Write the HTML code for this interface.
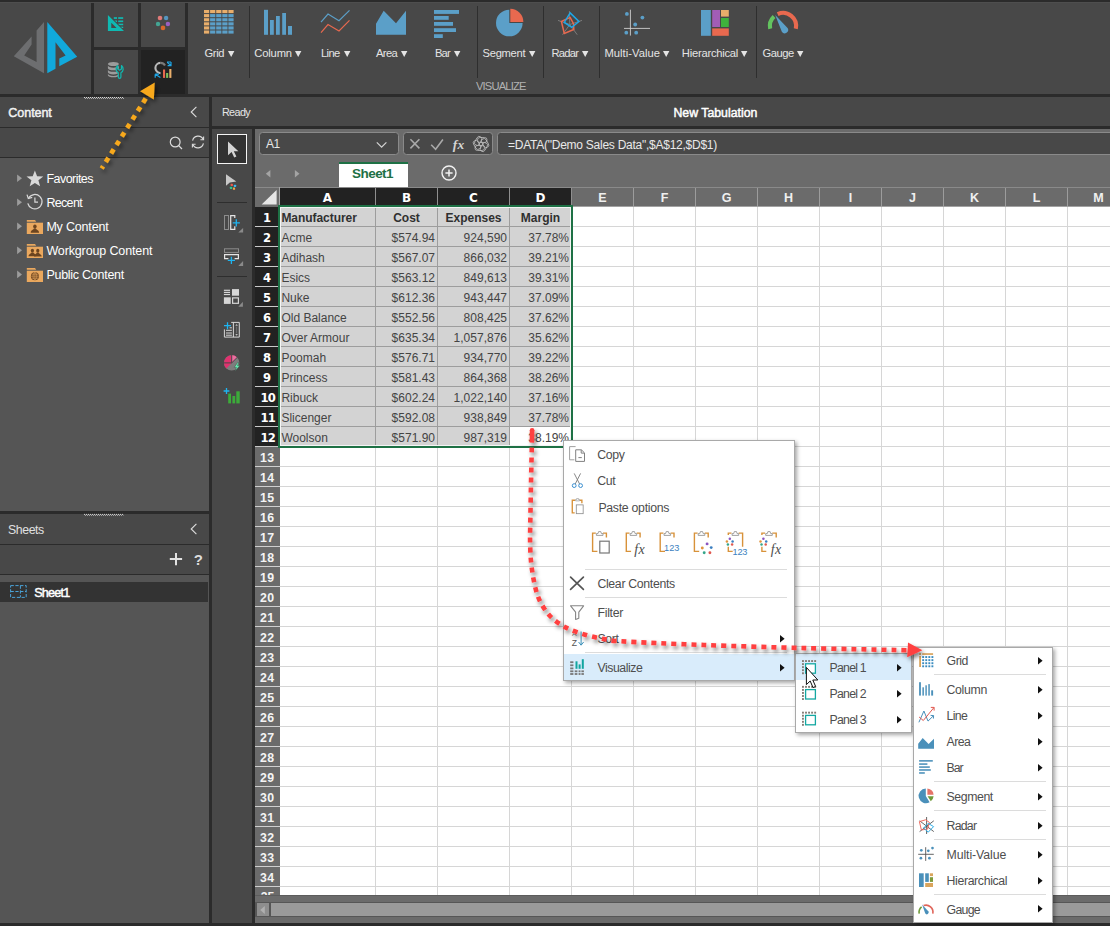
<!DOCTYPE html>
<html><head><meta charset="utf-8"><title>New Tabulation</title>
<style>
html,body{margin:0;padding:0;}
body{width:1110px;height:926px;overflow:hidden;position:relative;background:#484848;font-family:"Liberation Sans",Arial,sans-serif;}
body div,body svg,body span.t{position:absolute;}
span.t{display:block;}
svg{overflow:visible;}
</style></head><body>
<div style="left:0px;top:0px;width:1110px;height:926px;background:#2b2b2b;"></div>
<div style="left:0px;top:2px;width:1110px;height:1px;background:#4e4e4e;"></div>
<div style="left:0px;top:3px;width:91px;height:91px;background:#484848;"></div>
<div style="left:94px;top:3px;width:44px;height:44px;background:#484848;"></div>
<div style="left:141px;top:3px;width:44px;height:44px;background:#484848;"></div>
<div style="left:94px;top:50px;width:44px;height:44px;background:#484848;"></div>
<div style="left:141px;top:50px;width:44px;height:44px;background:#222222;"></div>
<div style="left:188px;top:3px;width:922px;height:91px;background:#484848;"></div>
<div style="left:0px;top:97px;width:209px;height:30px;background:#484848;"></div>
<div style="left:212px;top:97px;width:898px;height:29px;background:#484848;"></div>
<div style="left:0px;top:128px;width:209px;height:29px;background:#484848;"></div>
<div style="left:0px;top:158px;width:209px;height:353px;background:#555555;"></div>
<div style="left:0px;top:514px;width:209px;height:30px;background:#484848;"></div>
<div style="left:0px;top:545px;width:209px;height:29px;background:#484848;"></div>
<div style="left:0px;top:575px;width:209px;height:348px;background:#555555;"></div>
<div style="left:212px;top:129px;width:40px;height:794px;background:#484848;"></div>
<div style="left:255px;top:129px;width:855px;height:794px;background:#6b6b6b;"></div>
<svg style="left:0px;top:0px;" width="92" height="95" viewBox="0 0 92 95"><polygon points="44,22 44,73.2 13.8,56.2 31.6,36.4 31.6,44.5 24.2,55.4 36.6,62 36.6,30.4" fill="#6d6e70"/><polygon points="47.3,22 77.2,56.7 59.3,66.3 59.3,58.6 65.6,55.4 55.5,42.2 55.5,68.7 47.3,73.2" fill="#11a9dc"/></svg>
<svg style="left:94px;top:3px;" width="44" height="44" viewBox="0 0 44 44"><rect x="19.8" y="14.2" width="3.2" height="1.7" fill="#0fbab2"/><rect x="24.2" y="14.2" width="5" height="1.7" fill="#0fbab2"/><rect x="19.8" y="17.5" width="3.2" height="1.6" fill="#0fbab2"/><rect x="24.2" y="17.5" width="5" height="1.6" fill="#0fbab2"/><rect x="19.8" y="20.7" width="3.2" height="1.5" fill="#0fbab2"/><rect x="24.2" y="20.7" width="5" height="1.5" fill="#0fbab2"/><rect x="19.8" y="23.7" width="3.2" height="1.3" fill="#0fbab2"/><rect x="24.2" y="23.7" width="5" height="1.3" fill="#0fbab2"/><polygon points="13.9,10.6 13.9,29 32,29" fill="#484848"/><path d="M13.9 12 L13.9 27.9 L30 27.9 Z M17.3 19.8 L17.3 24.9 L22.6 24.9 Z" fill="#0fbab2" fill-rule="evenodd"/></svg>
<svg style="left:141px;top:3px;" width="44" height="44" viewBox="0 0 44 44"><circle cx="19" cy="15" r="2.3" fill="#e07a78"/><circle cx="25.1" cy="15" r="2.2" fill="#5596c0"/><circle cx="17" cy="21" r="2.2" fill="#44a594"/><circle cx="26.9" cy="21" r="2.2" fill="#9a5fc0"/><circle cx="22" cy="24.9" r="2.3" fill="#d9682a"/></svg>
<svg style="left:94px;top:50px;" width="44" height="44" viewBox="0 0 44 44"><g fill="#9c9c9c"><ellipse cx="19.4" cy="14" rx="5.5" ry="2.1"/><path d="M13.9 15.6 a5.5 2.1 0 0 0 11 0 v2.6 a5.5 2.1 0 0 1 -11 0z"/><path d="M13.9 19.7 a5.5 2.1 0 0 0 11 0 v2.6 a5.5 2.1 0 0 1 -11 0z"/><path d="M13.9 23.8 a5.5 2.1 0 0 0 11 0 v1.4 a5.5 2.1 0 0 1 -11 0z"/></g><path d="M23.7 15.6 a4.3 4.3 0 0 0 0.6 7.2 v4.2 a1.2 1.2 0 0 0 2.6 0 v-4.2 a4.3 4.3 0 0 0 0.6 -7.2 v3.4 l-1.9 1.2 l-1.9 -1.2 z" fill="#484848" stroke="#10b8b0" stroke-width="1.2" stroke-linejoin="round"/></svg>
<svg style="left:141px;top:50px;" width="44" height="44" viewBox="0 0 44 44"><path d="M19.5 12.9 A5.1 5.1 0 1 0 19.5 23.1" fill="none" stroke="#b9b9b9" stroke-width="2.1"/><path d="M19.5 12.9 A5.1 5.1 0 0 1 24 15.6" fill="none" stroke="#7a7a7a" stroke-width="2.1"/><path d="M26.2 12.4 L29.6 15.2 M26 12 H30 M30 12 V15.6 H26.6" fill="none" stroke="#1ea7e8" stroke-width="1.2"/><path d="M14.2 24.2 L19.4 27.4 M14.2 24.2 H18 M14.2 24.2 V27.8" fill="none" stroke="#1ea7e8" stroke-width="1.2"/><rect x="22" y="19.5" width="2.1" height="8.4" fill="#e8694f"/><rect x="25.1" y="23" width="2.1" height="4.9" fill="#7cc05c"/><rect x="28.3" y="19" width="2.1" height="8.9" fill="#e9ae6b"/></svg>
<div style="left:249px;top:6px;width:1px;height:72px;background:#2e2e2e;"></div>
<div style="left:477px;top:6px;width:1px;height:72px;background:#2e2e2e;"></div>
<div style="left:543px;top:6px;width:1px;height:72px;background:#2e2e2e;"></div>
<div style="left:599px;top:6px;width:1px;height:72px;background:#2e2e2e;"></div>
<div style="left:756px;top:6px;width:1px;height:72px;background:#2e2e2e;"></div>
<svg style="left:203.6px;top:9.9px;" width="30" height="24" viewBox="0 0 30 24"><rect x="0.0" y="0.0" width="5.2" height="3.1" fill="#e9ae6b"/><rect x="6.1" y="0.0" width="5.2" height="3.1" fill="#e9ae6b"/><rect x="12.2" y="0.0" width="5.2" height="3.1" fill="#e9ae6b"/><rect x="18.3" y="0.0" width="5.2" height="3.1" fill="#e9ae6b"/><rect x="24.4" y="0.0" width="5.2" height="3.1" fill="#e9ae6b"/><rect x="0.0" y="4.1" width="5.2" height="3.1" fill="#e9ae6b"/><rect x="6.1" y="4.1" width="5.2" height="3.1" fill="#5b9fc8"/><rect x="12.2" y="4.1" width="5.2" height="3.1" fill="#5b9fc8"/><rect x="18.3" y="4.1" width="5.2" height="3.1" fill="#5b9fc8"/><rect x="24.4" y="4.1" width="5.2" height="3.1" fill="#5b9fc8"/><rect x="0.0" y="8.2" width="5.2" height="3.1" fill="#e9ae6b"/><rect x="6.1" y="8.2" width="5.2" height="3.1" fill="#5b9fc8"/><rect x="12.2" y="8.2" width="5.2" height="3.1" fill="#5b9fc8"/><rect x="18.3" y="8.2" width="5.2" height="3.1" fill="#5b9fc8"/><rect x="24.4" y="8.2" width="5.2" height="3.1" fill="#5b9fc8"/><rect x="0.0" y="12.3" width="5.2" height="3.1" fill="#e9ae6b"/><rect x="6.1" y="12.3" width="5.2" height="3.1" fill="#5b9fc8"/><rect x="12.2" y="12.3" width="5.2" height="3.1" fill="#5b9fc8"/><rect x="18.3" y="12.3" width="5.2" height="3.1" fill="#5b9fc8"/><rect x="24.4" y="12.3" width="5.2" height="3.1" fill="#5b9fc8"/><rect x="0.0" y="16.4" width="5.2" height="3.1" fill="#e9ae6b"/><rect x="6.1" y="16.4" width="5.2" height="3.1" fill="#5b9fc8"/><rect x="12.2" y="16.4" width="5.2" height="3.1" fill="#5b9fc8"/><rect x="18.3" y="16.4" width="5.2" height="3.1" fill="#5b9fc8"/><rect x="24.4" y="16.4" width="5.2" height="3.1" fill="#5b9fc8"/><rect x="0.0" y="20.5" width="5.2" height="3.1" fill="#e9ae6b"/><rect x="6.1" y="20.5" width="5.2" height="3.1" fill="#5b9fc8"/><rect x="12.2" y="20.5" width="5.2" height="3.1" fill="#5b9fc8"/><rect x="18.3" y="20.5" width="5.2" height="3.1" fill="#5b9fc8"/><rect x="24.4" y="20.5" width="5.2" height="3.1" fill="#5b9fc8"/></svg>
<svg style="left:264px;top:9px;" width="30" height="27" viewBox="0 0 30 27"><g fill="#5b9fc8"><rect x="0" y="0.8" width="4" height="25"/><rect x="6" y="11" width="3.8" height="14.8"/><rect x="12" y="7" width="3.8" height="18.8"/><rect x="18.2" y="4" width="3.8" height="21.8"/><rect x="24" y="17" width="4" height="8.8"/></g></svg>
<svg style="left:318px;top:6px;" width="36" height="32" viewBox="0 0 36 32"><polyline points="3,16.2 10,8 21,14.7 31.5,4.4" fill="none" stroke="#5b9fc8" stroke-width="1.2"/><polyline points="3,26.7 10,18.5 21,25 31.5,14.3" fill="none" stroke="#e8694f" stroke-width="1.2"/></svg>
<svg style="left:376px;top:9px;" width="31" height="27" viewBox="0 0 31 27"><polygon points="0,25.8 0,14.8 7.7,1.8 20,14.2 30,1.8 30,25.8" fill="#5b9fc8"/></svg>
<svg style="left:434px;top:10px;" width="26" height="29" viewBox="0 0 26 29"><g fill="#5b9fc8"><rect x="0" y="0" width="25" height="3.9"/><rect x="0" y="6" width="14.7" height="3.8"/><rect x="0" y="12" width="19" height="3.8"/><rect x="0" y="18.2" width="22" height="3.8"/><rect x="0" y="24.2" width="8.8" height="3.8"/></g></svg>
<svg style="left:495px;top:8px;" width="30" height="30" viewBox="0 0 30 30"><path d="M14.3 15 L14.3 1.7 A13.3 13.3 0 1 0 27.6 15 Z" fill="#5b9fc8"/><path d="M15.3 13.9 L15.3 0.8 A13.1 13.1 0 0 1 28.4 13.9 Z" fill="#e8694f"/></svg>
<svg style="left:555px;top:8px;" width="30" height="30" viewBox="0 0 30 30"><g stroke="#7c7c7c" stroke-width="1" fill="none"><path d="M14.8 16.5 L14.4 3.1 M14.8 16.5 L27 12.4 M14.8 16.5 L22.2 26.7 M14.8 16.5 L7.5 26.7 M14.8 16.5 L3 12.4"/></g><polygon points="15.1,9.4 18.5,15.7 18.8,21.5 9.3,25.4 6.4,13.5" fill="none" stroke="#e8694f" stroke-width="1.5"/><polygon points="15.1,4.9 23.9,13.5 16.8,19.3 9.3,14.4" fill="none" stroke="#1ea7e8" stroke-width="1.5"/></svg>
<svg style="left:620px;top:8px;" width="34" height="30" viewBox="0 0 34 30"><path d="M10.4 1.7 V27.6 M4 20.4 H30" stroke="#d0d0d0" stroke-width="0.9" fill="none"/><g fill="#5b9fc8"><circle cx="6.9" cy="5.9" r="1.9"/><circle cx="22.4" cy="9.6" r="1.9"/><circle cx="15.2" cy="16.5" r="1.9"/><circle cx="6.3" cy="24.7" r="1.9"/><circle cx="16.2" cy="24.7" r="1.9"/></g></svg>
<svg style="left:701px;top:10px;" width="28" height="26" viewBox="0 0 28 26"><rect x="0" y="0" width="9.8" height="25.8" fill="#5b9fc8"/><rect x="11.2" y="0" width="7.8" height="17" fill="#a25db5"/><rect x="20" y="0" width="7.8" height="6.6" fill="#e9ae6b"/><rect x="20" y="8" width="7.8" height="9" fill="#3fb23c"/><rect x="11.2" y="18.4" width="16.6" height="7.4" fill="#e8694f"/></svg>
<svg style="left:765px;top:8px;" width="36" height="30" viewBox="0 0 36 30"><path d="M5.2 20.8 A13.1 13.1 0 0 1 9.07 8.42" fill="none" stroke="#63c35f" stroke-width="4.1"/><path d="M12.67 6.03 A13.1 13.1 0 0 1 30.8 20.8" fill="none" stroke="#e8694f" stroke-width="4.1"/><path d="M10.2 7 L22.57 20.07 A3.4 3.4 0 0 1 16.83 23.73 Z" fill="#5b9fc8"/></svg>
<span class="t" style="top:45px;height:16px;line-height:16px;font-size:11.2px;color:#e4e4e4;white-space:pre;letter-spacing:-0.365px;left:204.50px;">Grid</span>
<svg style="left:227.9px;top:50.6px;" width="7" height="7" viewBox="0 0 7 7"><polygon points="0,0 6.4,0 3.2,6" fill="#e4e4e4"/></svg>
<span class="t" style="top:45px;height:16px;line-height:16px;font-size:11.2px;color:#e4e4e4;white-space:pre;letter-spacing:-0.132px;left:254.20px;">Column</span>
<svg style="left:295.3px;top:50.6px;" width="7" height="7" viewBox="0 0 7 7"><polygon points="0,0 6.4,0 3.2,6" fill="#e4e4e4"/></svg>
<span class="t" style="top:45px;height:16px;line-height:16px;font-size:11.2px;color:#e4e4e4;white-space:pre;letter-spacing:-0.644px;left:321.00px;">Line</span>
<svg style="left:344.0px;top:50.6px;" width="7" height="7" viewBox="0 0 7 7"><polygon points="0,0 6.4,0 3.2,6" fill="#e4e4e4"/></svg>
<span class="t" style="top:45px;height:16px;line-height:16px;font-size:11.2px;color:#e4e4e4;white-space:pre;letter-spacing:-0.590px;left:375.90px;">Area</span>
<svg style="left:401.0px;top:50.6px;" width="7" height="7" viewBox="0 0 7 7"><polygon points="0,0 6.4,0 3.2,6" fill="#e4e4e4"/></svg>
<span class="t" style="top:45px;height:16px;line-height:16px;font-size:11.2px;color:#e4e4e4;white-space:pre;letter-spacing:-0.843px;left:434.90px;">Bar</span>
<svg style="left:453.5px;top:50.6px;" width="7" height="7" viewBox="0 0 7 7"><polygon points="0,0 6.4,0 3.2,6" fill="#e4e4e4"/></svg>
<span class="t" style="top:45px;height:16px;line-height:16px;font-size:11.2px;color:#e4e4e4;white-space:pre;letter-spacing:-0.276px;left:482.50px;">Segment</span>
<svg style="left:528.7px;top:50.6px;" width="7" height="7" viewBox="0 0 7 7"><polygon points="0,0 6.4,0 3.2,6" fill="#e4e4e4"/></svg>
<span class="t" style="top:45px;height:16px;line-height:16px;font-size:11.2px;color:#e4e4e4;white-space:pre;letter-spacing:-0.741px;left:551.50px;">Radar</span>
<svg style="left:582.0px;top:50.6px;" width="7" height="7" viewBox="0 0 7 7"><polygon points="0,0 6.4,0 3.2,6" fill="#e4e4e4"/></svg>
<span class="t" style="top:45px;height:16px;line-height:16px;font-size:11.2px;color:#e4e4e4;white-space:pre;letter-spacing:0.028px;left:604.50px;">Multi-Value</span>
<svg style="left:663.2px;top:50.6px;" width="7" height="7" viewBox="0 0 7 7"><polygon points="0,0 6.4,0 3.2,6" fill="#e4e4e4"/></svg>
<span class="t" style="top:45px;height:16px;line-height:16px;font-size:11.2px;color:#e4e4e4;white-space:pre;letter-spacing:-0.228px;left:681.80px;">Hierarchical</span>
<svg style="left:741.3000000000001px;top:50.6px;" width="7" height="7" viewBox="0 0 7 7"><polygon points="0,0 6.4,0 3.2,6" fill="#e4e4e4"/></svg>
<span class="t" style="top:45px;height:16px;line-height:16px;font-size:11.2px;color:#e4e4e4;white-space:pre;letter-spacing:-0.466px;left:762.40px;">Gauge</span>
<svg style="left:796.8000000000001px;top:50.6px;" width="7" height="7" viewBox="0 0 7 7"><polygon points="0,0 6.4,0 3.2,6" fill="#e4e4e4"/></svg>
<span class="t" style="top:78px;height:16px;line-height:16px;font-size:11.2px;color:#b2b2b2;white-space:pre;letter-spacing:-0.841px;left:475.90px;">VISUALIZE</span>
<span class="t" style="top:104px;height:16px;line-height:16px;font-size:10.8px;color:#e6e6e6;white-space:pre;letter-spacing:-0.584px;left:221.90px;">Ready</span>
<span class="t" style="top:104px;height:18px;line-height:18px;font-size:12.3px;color:#ffffff;white-space:pre;-webkit-text-stroke:0.45px #ffffff;letter-spacing:0.009px;left:673.40px;">New Tabulation</span>
<span class="t" style="top:104px;height:18px;line-height:18px;font-size:12.6px;color:#f2f2f2;white-space:pre;-webkit-text-stroke:0.45px #f2f2f2;letter-spacing:-0.090px;left:8.30px;">Content</span>
<svg style="left:189.5px;top:105.9px;" width="8" height="12" viewBox="0 0 8 12"><polyline points="6.4,0.9 1.2,6 6.4,11.1" fill="none" stroke="#dcdcdc" stroke-width="1.1"/></svg>
<svg style="left:0px;top:0px;" width="1" height="1" viewBox="0 0 1 1"><path d="M84 97.5 H124" stroke="#e6e6e6" stroke-width="0.9" stroke-dasharray="1 1"/><path d="M85 98.39999999999999 H124" stroke="#bdbdbd" stroke-width="0.9" stroke-dasharray="1 1"/></svg>
<svg style="left:0px;top:0px;" width="1" height="1" viewBox="0 0 1 1"><path d="M84 514.4 H123.5" stroke="#e6e6e6" stroke-width="0.9" stroke-dasharray="1 1"/><path d="M85 515.3 H123.5" stroke="#bdbdbd" stroke-width="0.9" stroke-dasharray="1 1"/></svg>
<svg style="left:168.4px;top:134.6px;" width="16" height="16" viewBox="0 0 16 16"><circle cx="7.2" cy="7" r="4.9" fill="none" stroke="#dcdcdc" stroke-width="1.2"/><path d="M10.7 10.6 L14 14" stroke="#dcdcdc" stroke-width="1.3"/></svg>
<svg style="left:190px;top:134.4px;" width="16" height="16" viewBox="0 0 16 16"><path d="M2.6 6.6 A5.6 5.6 0 0 1 13.2 5.4 M13.4 9.4 A5.6 5.6 0 0 1 2.8 10.6" fill="none" stroke="#dcdcdc" stroke-width="1.1"/><path d="M13.6 2.6 V5.8 H10.4 M2.4 13.4 V10.2 H5.6" fill="none" stroke="#dcdcdc" stroke-width="1.1"/></svg>
<span class="t" style="top:170px;height:18px;line-height:18px;font-size:12.5px;color:#ffffff;white-space:pre;letter-spacing:-0.534px;left:46.40px;">Favorites</span>
<span class="t" style="top:194px;height:18px;line-height:18px;font-size:12.5px;color:#ffffff;white-space:pre;letter-spacing:-0.668px;left:46.40px;">Recent</span>
<span class="t" style="top:218px;height:18px;line-height:18px;font-size:12.5px;color:#ffffff;white-space:pre;letter-spacing:-0.182px;left:46.40px;">My Content</span>
<span class="t" style="top:242px;height:18px;line-height:18px;font-size:12.5px;color:#ffffff;white-space:pre;letter-spacing:-0.133px;left:46.40px;">Workgroup Content</span>
<span class="t" style="top:266px;height:18px;line-height:18px;font-size:12.5px;color:#ffffff;white-space:pre;letter-spacing:-0.264px;left:46.40px;">Public Content</span>
<svg style="left:0px;top:0px;" width="1110" height="926" viewBox="0 0 1110 926"><polygon points="17.1,174.4 17.1,182.0 22,178.2" fill="#9c9c9c"/><polygon points="17.1,198.4 17.1,206.1 22,202.2" fill="#9c9c9c"/><polygon points="17.1,222.5 17.1,230.1 22,226.3" fill="#9c9c9c"/><polygon points="17.1,246.5 17.1,254.2 22,250.3" fill="#9c9c9c"/><polygon points="17.1,270.6 17.1,278.2 22,274.4" fill="#9c9c9c"/><polygon points="34.9,170.4 37.1,176.2 43.3,176.5 38.4,180.3 40.1,186.3 34.9,182.9 29.7,186.3 31.4,180.3 26.5,176.5 32.7,176.2" fill="#d8d8d8"/><path d="M28.6 198 A7.2 7.2 0 1 1 27.8 203.4" fill="none" stroke="#d8d8d8" stroke-width="1.3"/><path d="M27 194.6 L28.3 198.6 L32.2 197.4" fill="none" stroke="#d8d8d8" stroke-width="1.2"/><path d="M34.9 197.4 V202.2 H38" fill="none" stroke="#d8d8d8" stroke-width="1.2"/><path d="M26.8 220.1 H35 L36.2 221.7 H26.8 Z" fill="#eaa85e"/><rect x="26.8" y="222.7" width="16.2" height="11.3" fill="#eaa85e"/><ellipse cx="34.9" cy="226.6" rx="1.75" ry="2.1" fill="#6b4420"/><path d="M30.7 232.79999999999998 C30.7 230.2 33.3 230.0 33.9 228.6 H35.9 C36.5 230.0 39.1 230.2 39.1 232.79999999999998 Z" fill="#6b4420"/><path d="M26.8 244.1 H35 L36.2 245.7 H26.8 Z" fill="#eaa85e"/><rect x="26.8" y="246.7" width="16.2" height="11.3" fill="#eaa85e"/><ellipse cx="32.4" cy="250.6" rx="1.61" ry="1.9320000000000002" fill="#6b4420"/><path d="M28.535999999999998 256.304 C28.535999999999998 253.912 30.927999999999997 253.728 31.479999999999997 252.44 H33.32 C33.872 253.728 36.263999999999996 253.912 36.263999999999996 256.304 Z" fill="#6b4420"/><ellipse cx="37.8" cy="250.8" rx="1.61" ry="1.9320000000000002" fill="#6b4420"/><path d="M33.936 256.504 C33.936 254.11200000000002 36.327999999999996 253.928 36.879999999999995 252.64000000000001 H38.72 C39.272 253.928 41.663999999999994 254.11200000000002 41.663999999999994 256.504 Z" fill="#6b4420"/><path d="M26.8 268.1 H35 L36.2 269.70000000000005 H26.8 Z" fill="#eaa85e"/><rect x="26.8" y="270.70000000000005" width="16.2" height="11.3" fill="#eaa85e"/><circle cx="34.9" cy="276.2" r="4" fill="#6b4420"/><path d="M30.9 276.2 H38.9 M34.9 272.2 V280.2 M31.6 274.2 H38.2 M31.6 278.2 H38.2 M34.9 272.2 C32.4 274 32.4 278.4 34.9 280.2 C37.4 278.4 37.4 274 34.9 272.2" fill="none" stroke="#eaa85e" stroke-width="0.55"/></svg>
<span class="t" style="top:521px;height:18px;line-height:18px;font-size:12.3px;color:#e0e0e0;white-space:pre;letter-spacing:-0.432px;left:8.10px;">Sheets</span>
<svg style="left:189.7px;top:523.2px;" width="8" height="12" viewBox="0 0 8 12"><polyline points="6.4,0.9 1.2,6 6.4,11.1" fill="none" stroke="#dcdcdc" stroke-width="1.1"/></svg>
<svg style="left:0px;top:0px;" width="1" height="1" viewBox="0 0 1 1"><path d="M176 552.9 V565.2 M169.8 559.05 H182.1" stroke="#e2e2e2" stroke-width="2"/></svg>
<span class="t" style="top:549px;height:21px;line-height:21px;font-size:15px;color:#dcdcdc;white-space:pre;font-weight:bold;left:193.80px;">?</span>
<div style="left:0px;top:582px;width:208px;height:19.5px;background:#333333;"></div>
<svg style="left:9.5px;top:585px;" width="17" height="13" viewBox="0 0 17 13"><rect x="0.6" y="0.6" width="15.6" height="11.8" fill="none" stroke="#4aa3d8" stroke-width="1" stroke-dasharray="3.2 1.6"/><path d="M0.6 6.5 H16.2 M10.4 0.6 V12.4" stroke="#4aa3d8" stroke-width="1" stroke-dasharray="3.2 1.6"/></svg>
<span class="t" style="top:584px;height:18px;line-height:18px;font-size:12.6px;color:#ffffff;white-space:pre;-webkit-text-stroke:0.45px #ffffff;letter-spacing:-0.773px;left:34.20px;">Sheet1</span>
<div style="left:217px;top:134px;width:30px;height:30px;background:#323232;border:1px solid #f4f4f4;box-sizing:border-box;"></div>
<svg style="left:217px;top:134px;" width="30" height="30" viewBox="0 0 30 30"><path d="M11 7.5 V21.3 L14.6 18 L17.2 23.6 L19.4 22.6 L16.8 17.2 L21.4 17.2 Z" fill="#d4d4d4"/></svg>
<svg style="left:0px;top:0px;" width="1110" height="926" viewBox="0 0 1110 926"><polygon points="226,174.2 236.3,181.4 229.8,182.4 226,185.8" fill="#c8c8c8"/><rect x="230.70000000000002" y="183.70000000000002" width="2.2" height="2.2" rx="0.5" fill="#ef5b4c"/><rect x="233.9" y="184.8" width="2.2" height="2.2" rx="0.5" fill="#3db5ef"/><rect x="229.9" y="186.70000000000002" width="2.2" height="2.2" rx="0.5" fill="#2fc48d"/><rect x="232.9" y="187.6" width="2.2" height="2.2" rx="0.5" fill="#f0a64e"/><rect x="224.5" y="215.5" width="4" height="14" fill="none" stroke="#8c8c8c" stroke-width="1"/><path d="M234.8 218 V215.6 H230.7 V229.4 H234.8 V226.2" fill="none" stroke="#e4e4e4" stroke-width="1.2"/><path d="M236.3 219.2 V226.4 M232.7 222.8 H239.9" stroke="#1eb4f0" stroke-width="1.3"/><polygon points="243.1,227.9 243.1,232.5 238.3,232.5" fill="#8a8a8a"/><rect x="224.5" y="248.8" width="14" height="3.6" fill="none" stroke="#8c8c8c" stroke-width="1"/><path d="M228.4 258.6 H224.6 V254.7 H238.4 V258.6 H234.6" fill="none" stroke="#e4e4e4" stroke-width="1.2"/><path d="M231.4 256.7 V263.9 M227.8 260.3 H235" stroke="#1eb4f0" stroke-width="1.3"/><polygon points="243.1,260.9 243.1,265.9 238.3,265.9" fill="#8a8a8a"/></svg>
<div style="left:217px;top:202px;width:30px;height:1px;background:#2e2e2e;"></div>
<div style="left:217px;top:276px;width:30px;height:1px;background:#2e2e2e;"></div>
<svg style="left:0px;top:0px;" width="1110" height="926" viewBox="0 0 1110 926"><rect x="223.9" y="289.7" width="6.1" height="1.2" fill="#d6d6d6"/><rect x="223.9" y="291.8" width="6.1" height="1.2" fill="#d6d6d6"/><rect x="223.9" y="293.9" width="6.1" height="1.2" fill="#d6d6d6"/><rect x="232" y="289.1" width="7" height="6.6" fill="#d6d6d6"/><rect x="223.9" y="297.3" width="6.8" height="6.6" fill="#d6d6d6"/><rect x="232.6" y="297.9" width="5.8" height="5.4" fill="none" stroke="#d6d6d6" stroke-width="1.2"/><polygon points="242.9,301.8 242.9,306.7 238.3,306.7" fill="#8a8a8a"/><path d="M224.4 329.4 V337.1 H239.3 V322.4 H231.2" fill="none" stroke="#d6d6d6" stroke-width="1"/><path d="M233.4 322.4 V337.1" stroke="#d6d6d6" stroke-width="1"/><path d="M229.6 327.8 H231.9 M226 330.3 H231.9 M226 333 H231.9 M226 335.2 H231.9" stroke="#d6d6d6" stroke-width="1"/><polygon points="236.6,324 237.9,325.8 235.3,325.8" fill="#bdbdbd"/><polygon points="236.6,335.8 237.9,334 235.3,334" fill="#bdbdbd"/><path d="M236.6 326.6 V333.2" stroke="#8a8a8a" stroke-width="0.6"/><path d="M227.5 322.2 V329.2 M224 325.7 H231" stroke="#1eb4f0" stroke-width="1.3"/><circle cx="231.7" cy="362.9" r="7.7" fill="#7d7d7d"/><path d="M231.7 362.9 L237.1 357.4 A7.7 7.7 0 1 0 226.3 368.4 Z" fill="#e0326f"/><path d="M231.7 362.9 V355.2 A7.7 7.7 0 0 1 237.1 357.4 Z" fill="#ea6fa0"/><path d="M231.7 354.8 V362.9 H223.6 M231.7 362.9 L237.6 357" stroke="#484848" stroke-width="1" fill="none"/><polygon points="237.6,362.6 234.2,367.4 236.4,367.4 235,371.2 239.9,365.6 237.5,365.6 239,362.6" fill="#62f2b4" stroke="#484848" stroke-width="0.5"/><rect x="228.2" y="393.6" width="2.8" height="9.8" fill="#3cab3a"/><rect x="232.4" y="396" width="2.8" height="7.4" fill="#3cab3a"/><rect x="236.3" y="391.3" width="3.4" height="12.1" fill="#3cab3a"/><path d="M226.5 388.1 V393.9 M223.6 391 H229.4" stroke="#1eb4f0" stroke-width="1.3"/></svg>
<div style="left:259px;top:132px;width:139.5px;height:23px;background:#484848;border:1px solid #8a8a8a;box-sizing:border-box;border-radius:3.5px;"></div>
<div style="left:403px;top:132px;width:89.5px;height:23px;background:#484848;border:1px solid #8a8a8a;box-sizing:border-box;border-radius:3.5px;"></div>
<div style="left:497px;top:132px;width:640px;height:23px;background:#484848;border:1px solid #8a8a8a;box-sizing:border-box;border-radius:3.5px;"></div>
<span class="t" style="top:135px;height:18px;line-height:18px;font-size:12px;color:#e6e6e6;white-space:pre;letter-spacing:-0.389px;left:266.00px;">A1</span>
<svg style="left:376.4px;top:139.6px;" width="12" height="10" viewBox="0 0 12 10"><polyline points="0.8,2.4 5.6,7.2 10.4,2.4" fill="none" stroke="#d4d4d4" stroke-width="1.2"/></svg>
<svg style="left:409px;top:138px;" width="12" height="12" viewBox="0 0 12 12"><path d="M1.4 1.2 L10.4 10.4 M10.4 1.2 L1.4 10.4" stroke="#a9a9a9" stroke-width="1.6"/></svg>
<svg style="left:430px;top:138px;" width="14" height="12" viewBox="0 0 14 12"><path d="M1.2 6.8 L5.6 11.2 L12.9 1.4" fill="none" stroke="#a9a9a9" stroke-width="1.6"/></svg>
<span class="t" style="top:135px;height:19px;line-height:19px;font-size:13.5px;color:#d4d4d4;white-space:pre;font-family:'Liberation Serif','Times New Roman',serif;font-weight:bold;font-style:italic;left:452.80px;letter-spacing:0.3px;">fx</span>
<svg style="left:473px;top:136px;" width="16" height="16" viewBox="0 0 16 16"><g transform="translate(8,8)"><rect x="-2.5" y="-4.8" width="5" height="9.6" rx="2.5" fill="none" stroke="#c2c2c2" stroke-width="0.75" transform="rotate(0) translate(4.1,-0.9) rotate(-30)"/><rect x="-2.5" y="-4.8" width="5" height="9.6" rx="2.5" fill="none" stroke="#c2c2c2" stroke-width="0.75" transform="rotate(60) translate(4.1,-0.9) rotate(-30)"/><rect x="-2.5" y="-4.8" width="5" height="9.6" rx="2.5" fill="none" stroke="#c2c2c2" stroke-width="0.75" transform="rotate(120) translate(4.1,-0.9) rotate(-30)"/><rect x="-2.5" y="-4.8" width="5" height="9.6" rx="2.5" fill="none" stroke="#c2c2c2" stroke-width="0.75" transform="rotate(180) translate(4.1,-0.9) rotate(-30)"/><rect x="-2.5" y="-4.8" width="5" height="9.6" rx="2.5" fill="none" stroke="#c2c2c2" stroke-width="0.75" transform="rotate(240) translate(4.1,-0.9) rotate(-30)"/><rect x="-2.5" y="-4.8" width="5" height="9.6" rx="2.5" fill="none" stroke="#c2c2c2" stroke-width="0.75" transform="rotate(300) translate(4.1,-0.9) rotate(-30)"/></g></svg>
<span class="t" style="top:136px;height:18px;line-height:18px;font-size:12px;color:#e9e9e9;white-space:pre;letter-spacing:-0.253px;left:508.00px;">=DATA(&quot;Demo Sales Data&quot;,$A$12,$D$1)</span>
<svg style="left:0px;top:0px;" width="1" height="1" viewBox="0 0 1 1"><polygon points="270.4,169.9 270.4,177.5 265.8,173.7" fill="#a4a4a4"/><polygon points="294.9,169.9 294.9,177.5 299.5,173.7" fill="#a4a4a4"/></svg>
<div style="left:339px;top:162px;width:69px;height:25px;background:#ffffff;border-top:2px solid #1e7145;box-sizing:border-box;"></div>
<span class="t" style="top:164px;height:19px;line-height:19px;font-size:13.5px;color:#1e7145;white-space:pre;font-weight:bold;letter-spacing:-0.562px;left:352.10px;">Sheet1</span>
<svg style="left:440.8px;top:165px;" width="16" height="16" viewBox="0 0 16 16"><circle cx="8" cy="8" r="7" fill="none" stroke="#f2f2f2" stroke-width="1.4"/><path d="M8 4.4 V11.6 M4.4 8 H11.6" stroke="#f2f2f2" stroke-width="1.5"/></svg>
<div style="left:280px;top:207px;width:830px;height:688px;background:#ffffff;"></div>
<div style="left:255px;top:187px;width:855px;height:20px;background:#6b6b6b;"></div>
<div style="left:255px;top:186.5px;width:855px;height:1px;background:#8a8a8a;"></div>
<svg style="left:255px;top:187px;" width="24" height="20" viewBox="0 0 24 20"><polygon points="21.6,3 21.6,17.6 6.6,17.6" fill="#e6e6e6"/></svg>
<div style="left:278.5px;top:187px;width:1px;height:20px;background:#a8a8a8;"></div>
<div style="left:280px;top:187.5px;width:292px;height:18.5px;background:#222222;"></div>
<span class="t" style="top:189px;height:18px;line-height:18px;font-size:12px;color:#ffffff;white-space:pre;font-family:'DejaVu Sans','Liberation Sans',sans-serif;font-weight:bold;left:177.50px;width:300px;text-align:center;">A</span>
<div style="left:375px;top:187.5px;width:1px;height:19px;background:#8f8f8f;"></div>
<span class="t" style="top:189px;height:18px;line-height:18px;font-size:12px;color:#ffffff;white-space:pre;font-family:'DejaVu Sans','Liberation Sans',sans-serif;font-weight:bold;left:256.50px;width:300px;text-align:center;">B</span>
<div style="left:437px;top:187.5px;width:1px;height:19px;background:#8f8f8f;"></div>
<span class="t" style="top:189px;height:18px;line-height:18px;font-size:12px;color:#ffffff;white-space:pre;font-family:'DejaVu Sans','Liberation Sans',sans-serif;font-weight:bold;left:323.50px;width:300px;text-align:center;">C</span>
<div style="left:509px;top:187.5px;width:1px;height:19px;background:#8f8f8f;"></div>
<span class="t" style="top:189px;height:18px;line-height:18px;font-size:12px;color:#ffffff;white-space:pre;font-family:'DejaVu Sans','Liberation Sans',sans-serif;font-weight:bold;left:390.50px;width:300px;text-align:center;">D</span>
<div style="left:571px;top:187.5px;width:1px;height:19px;background:#8f8f8f;"></div>
<span class="t" style="top:189px;height:18px;line-height:18px;font-size:12.5px;color:#f0f0f0;white-space:pre;font-weight:bold;left:452.50px;width:300px;text-align:center;">E</span>
<div style="left:633px;top:187.5px;width:1px;height:19px;background:#9c9c9c;"></div>
<span class="t" style="top:189px;height:18px;line-height:18px;font-size:12.5px;color:#f0f0f0;white-space:pre;font-weight:bold;left:514.50px;width:300px;text-align:center;">F</span>
<div style="left:695px;top:187.5px;width:1px;height:19px;background:#9c9c9c;"></div>
<span class="t" style="top:189px;height:18px;line-height:18px;font-size:12.5px;color:#f0f0f0;white-space:pre;font-weight:bold;left:576.50px;width:300px;text-align:center;">G</span>
<div style="left:757px;top:187.5px;width:1px;height:19px;background:#9c9c9c;"></div>
<span class="t" style="top:189px;height:18px;line-height:18px;font-size:12.5px;color:#f0f0f0;white-space:pre;font-weight:bold;left:638.50px;width:300px;text-align:center;">H</span>
<div style="left:819px;top:187.5px;width:1px;height:19px;background:#9c9c9c;"></div>
<span class="t" style="top:189px;height:18px;line-height:18px;font-size:12.5px;color:#f0f0f0;white-space:pre;font-weight:bold;left:700.50px;width:300px;text-align:center;">I</span>
<div style="left:881px;top:187.5px;width:1px;height:19px;background:#9c9c9c;"></div>
<span class="t" style="top:189px;height:18px;line-height:18px;font-size:12.5px;color:#f0f0f0;white-space:pre;font-weight:bold;left:762.50px;width:300px;text-align:center;">J</span>
<div style="left:943px;top:187.5px;width:1px;height:19px;background:#9c9c9c;"></div>
<span class="t" style="top:189px;height:18px;line-height:18px;font-size:12.5px;color:#f0f0f0;white-space:pre;font-weight:bold;left:824.50px;width:300px;text-align:center;">K</span>
<div style="left:1005px;top:187.5px;width:1px;height:19px;background:#9c9c9c;"></div>
<span class="t" style="top:189px;height:18px;line-height:18px;font-size:12.5px;color:#f0f0f0;white-space:pre;font-weight:bold;left:886.50px;width:300px;text-align:center;">L</span>
<div style="left:1067px;top:187.5px;width:1px;height:19px;background:#9c9c9c;"></div>
<span class="t" style="top:189px;height:18px;line-height:18px;font-size:12.5px;color:#f0f0f0;white-space:pre;font-weight:bold;left:948.50px;width:300px;text-align:center;">M</span>
<div style="left:1129px;top:187.5px;width:1px;height:19px;background:#9c9c9c;"></div>
<div style="left:572px;top:206px;width:538px;height:1px;background:#a2a2a2;"></div>
<div style="left:255px;top:207px;width:24px;height:19px;background:#222222;"></div>
<span class="t" style="top:209px;height:18px;line-height:18px;font-size:11.6px;color:#ffffff;white-space:pre;font-family:'DejaVu Sans','Liberation Sans',sans-serif;font-weight:bold;left:117.00px;width:300px;text-align:center;">1</span>
<div style="left:255px;top:226px;width:24px;height:1px;background:#c9c9c9;"></div>
<div style="left:255px;top:227px;width:24px;height:19px;background:#222222;"></div>
<span class="t" style="top:229px;height:18px;line-height:18px;font-size:11.6px;color:#ffffff;white-space:pre;font-family:'DejaVu Sans','Liberation Sans',sans-serif;font-weight:bold;left:117.00px;width:300px;text-align:center;">2</span>
<div style="left:255px;top:246px;width:24px;height:1px;background:#c9c9c9;"></div>
<div style="left:255px;top:247px;width:24px;height:19px;background:#222222;"></div>
<span class="t" style="top:249px;height:18px;line-height:18px;font-size:11.6px;color:#ffffff;white-space:pre;font-family:'DejaVu Sans','Liberation Sans',sans-serif;font-weight:bold;left:117.00px;width:300px;text-align:center;">3</span>
<div style="left:255px;top:266px;width:24px;height:1px;background:#c9c9c9;"></div>
<div style="left:255px;top:267px;width:24px;height:19px;background:#222222;"></div>
<span class="t" style="top:269px;height:18px;line-height:18px;font-size:11.6px;color:#ffffff;white-space:pre;font-family:'DejaVu Sans','Liberation Sans',sans-serif;font-weight:bold;left:117.00px;width:300px;text-align:center;">4</span>
<div style="left:255px;top:286px;width:24px;height:1px;background:#c9c9c9;"></div>
<div style="left:255px;top:287px;width:24px;height:19px;background:#222222;"></div>
<span class="t" style="top:289px;height:18px;line-height:18px;font-size:11.6px;color:#ffffff;white-space:pre;font-family:'DejaVu Sans','Liberation Sans',sans-serif;font-weight:bold;left:117.00px;width:300px;text-align:center;">5</span>
<div style="left:255px;top:306px;width:24px;height:1px;background:#c9c9c9;"></div>
<div style="left:255px;top:307px;width:24px;height:19px;background:#222222;"></div>
<span class="t" style="top:309px;height:18px;line-height:18px;font-size:11.6px;color:#ffffff;white-space:pre;font-family:'DejaVu Sans','Liberation Sans',sans-serif;font-weight:bold;left:117.00px;width:300px;text-align:center;">6</span>
<div style="left:255px;top:326px;width:24px;height:1px;background:#c9c9c9;"></div>
<div style="left:255px;top:327px;width:24px;height:19px;background:#222222;"></div>
<span class="t" style="top:329px;height:18px;line-height:18px;font-size:11.6px;color:#ffffff;white-space:pre;font-family:'DejaVu Sans','Liberation Sans',sans-serif;font-weight:bold;left:117.00px;width:300px;text-align:center;">7</span>
<div style="left:255px;top:346px;width:24px;height:1px;background:#c9c9c9;"></div>
<div style="left:255px;top:347px;width:24px;height:19px;background:#222222;"></div>
<span class="t" style="top:349px;height:18px;line-height:18px;font-size:11.6px;color:#ffffff;white-space:pre;font-family:'DejaVu Sans','Liberation Sans',sans-serif;font-weight:bold;left:117.00px;width:300px;text-align:center;">8</span>
<div style="left:255px;top:366px;width:24px;height:1px;background:#c9c9c9;"></div>
<div style="left:255px;top:367px;width:24px;height:19px;background:#222222;"></div>
<span class="t" style="top:369px;height:18px;line-height:18px;font-size:11.6px;color:#ffffff;white-space:pre;font-family:'DejaVu Sans','Liberation Sans',sans-serif;font-weight:bold;left:117.00px;width:300px;text-align:center;">9</span>
<div style="left:255px;top:386px;width:24px;height:1px;background:#c9c9c9;"></div>
<div style="left:255px;top:387px;width:24px;height:19px;background:#222222;"></div>
<span class="t" style="top:389px;height:18px;line-height:18px;font-size:11.6px;color:#ffffff;white-space:pre;font-family:'DejaVu Sans','Liberation Sans',sans-serif;font-weight:bold;left:117.00px;width:300px;text-align:center;letter-spacing:-0.75px;padding-left:0.75px;">10</span>
<div style="left:255px;top:406px;width:24px;height:1px;background:#c9c9c9;"></div>
<div style="left:255px;top:407px;width:24px;height:19px;background:#222222;"></div>
<span class="t" style="top:409px;height:18px;line-height:18px;font-size:11.6px;color:#ffffff;white-space:pre;font-family:'DejaVu Sans','Liberation Sans',sans-serif;font-weight:bold;left:117.00px;width:300px;text-align:center;letter-spacing:-0.75px;padding-left:0.75px;">11</span>
<div style="left:255px;top:426px;width:24px;height:1px;background:#c9c9c9;"></div>
<div style="left:255px;top:427px;width:24px;height:19px;background:#222222;"></div>
<span class="t" style="top:429px;height:18px;line-height:18px;font-size:11.6px;color:#ffffff;white-space:pre;font-family:'DejaVu Sans','Liberation Sans',sans-serif;font-weight:bold;left:117.00px;width:300px;text-align:center;letter-spacing:-0.75px;padding-left:0.75px;">12</span>
<div style="left:255px;top:446px;width:24px;height:1px;background:#c9c9c9;"></div>
<div style="left:255px;top:447px;width:25px;height:19px;background:#6b6b6b;"></div>
<span class="t" style="top:449px;height:18px;line-height:18px;font-size:12.3px;color:#f4f4f4;white-space:pre;font-weight:bold;letter-spacing:0.309px;left:260.00px;">13</span>
<div style="left:255px;top:466px;width:25px;height:1px;background:#cfcfcf;"></div>
<div style="left:255px;top:467px;width:25px;height:19px;background:#6b6b6b;"></div>
<span class="t" style="top:469px;height:18px;line-height:18px;font-size:12.3px;color:#f4f4f4;white-space:pre;font-weight:bold;letter-spacing:0.309px;left:260.00px;">14</span>
<div style="left:255px;top:486px;width:25px;height:1px;background:#cfcfcf;"></div>
<div style="left:255px;top:487px;width:25px;height:19px;background:#6b6b6b;"></div>
<span class="t" style="top:489px;height:18px;line-height:18px;font-size:12.3px;color:#f4f4f4;white-space:pre;font-weight:bold;letter-spacing:0.309px;left:260.00px;">15</span>
<div style="left:255px;top:506px;width:25px;height:1px;background:#cfcfcf;"></div>
<div style="left:255px;top:507px;width:25px;height:19px;background:#6b6b6b;"></div>
<span class="t" style="top:509px;height:18px;line-height:18px;font-size:12.3px;color:#f4f4f4;white-space:pre;font-weight:bold;letter-spacing:0.309px;left:260.00px;">16</span>
<div style="left:255px;top:526px;width:25px;height:1px;background:#cfcfcf;"></div>
<div style="left:255px;top:527px;width:25px;height:19px;background:#6b6b6b;"></div>
<span class="t" style="top:529px;height:18px;line-height:18px;font-size:12.3px;color:#f4f4f4;white-space:pre;font-weight:bold;letter-spacing:0.309px;left:260.00px;">17</span>
<div style="left:255px;top:546px;width:25px;height:1px;background:#cfcfcf;"></div>
<div style="left:255px;top:547px;width:25px;height:19px;background:#6b6b6b;"></div>
<span class="t" style="top:549px;height:18px;line-height:18px;font-size:12.3px;color:#f4f4f4;white-space:pre;font-weight:bold;letter-spacing:0.309px;left:260.00px;">18</span>
<div style="left:255px;top:566px;width:25px;height:1px;background:#cfcfcf;"></div>
<div style="left:255px;top:567px;width:25px;height:19px;background:#6b6b6b;"></div>
<span class="t" style="top:569px;height:18px;line-height:18px;font-size:12.3px;color:#f4f4f4;white-space:pre;font-weight:bold;letter-spacing:0.309px;left:260.00px;">19</span>
<div style="left:255px;top:586px;width:25px;height:1px;background:#cfcfcf;"></div>
<div style="left:255px;top:587px;width:25px;height:19px;background:#6b6b6b;"></div>
<span class="t" style="top:589px;height:18px;line-height:18px;font-size:12.3px;color:#f4f4f4;white-space:pre;font-weight:bold;letter-spacing:0.309px;left:260.00px;">20</span>
<div style="left:255px;top:606px;width:25px;height:1px;background:#cfcfcf;"></div>
<div style="left:255px;top:607px;width:25px;height:19px;background:#6b6b6b;"></div>
<span class="t" style="top:609px;height:18px;line-height:18px;font-size:12.3px;color:#f4f4f4;white-space:pre;font-weight:bold;letter-spacing:0.309px;left:260.00px;">21</span>
<div style="left:255px;top:626px;width:25px;height:1px;background:#cfcfcf;"></div>
<div style="left:255px;top:627px;width:25px;height:19px;background:#6b6b6b;"></div>
<span class="t" style="top:629px;height:18px;line-height:18px;font-size:12.3px;color:#f4f4f4;white-space:pre;font-weight:bold;letter-spacing:0.309px;left:260.00px;">22</span>
<div style="left:255px;top:646px;width:25px;height:1px;background:#cfcfcf;"></div>
<div style="left:255px;top:647px;width:25px;height:19px;background:#6b6b6b;"></div>
<span class="t" style="top:649px;height:18px;line-height:18px;font-size:12.3px;color:#f4f4f4;white-space:pre;font-weight:bold;letter-spacing:0.309px;left:260.00px;">23</span>
<div style="left:255px;top:666px;width:25px;height:1px;background:#cfcfcf;"></div>
<div style="left:255px;top:667px;width:25px;height:19px;background:#6b6b6b;"></div>
<span class="t" style="top:669px;height:18px;line-height:18px;font-size:12.3px;color:#f4f4f4;white-space:pre;font-weight:bold;letter-spacing:0.309px;left:260.00px;">24</span>
<div style="left:255px;top:686px;width:25px;height:1px;background:#cfcfcf;"></div>
<div style="left:255px;top:687px;width:25px;height:19px;background:#6b6b6b;"></div>
<span class="t" style="top:689px;height:18px;line-height:18px;font-size:12.3px;color:#f4f4f4;white-space:pre;font-weight:bold;letter-spacing:0.309px;left:260.00px;">25</span>
<div style="left:255px;top:706px;width:25px;height:1px;background:#cfcfcf;"></div>
<div style="left:255px;top:707px;width:25px;height:19px;background:#6b6b6b;"></div>
<span class="t" style="top:709px;height:18px;line-height:18px;font-size:12.3px;color:#f4f4f4;white-space:pre;font-weight:bold;letter-spacing:0.309px;left:260.00px;">26</span>
<div style="left:255px;top:726px;width:25px;height:1px;background:#cfcfcf;"></div>
<div style="left:255px;top:727px;width:25px;height:19px;background:#6b6b6b;"></div>
<span class="t" style="top:729px;height:18px;line-height:18px;font-size:12.3px;color:#f4f4f4;white-space:pre;font-weight:bold;letter-spacing:0.309px;left:260.00px;">27</span>
<div style="left:255px;top:746px;width:25px;height:1px;background:#cfcfcf;"></div>
<div style="left:255px;top:747px;width:25px;height:19px;background:#6b6b6b;"></div>
<span class="t" style="top:749px;height:18px;line-height:18px;font-size:12.3px;color:#f4f4f4;white-space:pre;font-weight:bold;letter-spacing:0.309px;left:260.00px;">28</span>
<div style="left:255px;top:766px;width:25px;height:1px;background:#cfcfcf;"></div>
<div style="left:255px;top:767px;width:25px;height:19px;background:#6b6b6b;"></div>
<span class="t" style="top:769px;height:18px;line-height:18px;font-size:12.3px;color:#f4f4f4;white-space:pre;font-weight:bold;letter-spacing:0.309px;left:260.00px;">29</span>
<div style="left:255px;top:786px;width:25px;height:1px;background:#cfcfcf;"></div>
<div style="left:255px;top:787px;width:25px;height:19px;background:#6b6b6b;"></div>
<span class="t" style="top:789px;height:18px;line-height:18px;font-size:12.3px;color:#f4f4f4;white-space:pre;font-weight:bold;letter-spacing:0.309px;left:260.00px;">30</span>
<div style="left:255px;top:806px;width:25px;height:1px;background:#cfcfcf;"></div>
<div style="left:255px;top:807px;width:25px;height:19px;background:#6b6b6b;"></div>
<span class="t" style="top:809px;height:18px;line-height:18px;font-size:12.3px;color:#f4f4f4;white-space:pre;font-weight:bold;letter-spacing:0.309px;left:260.00px;">31</span>
<div style="left:255px;top:826px;width:25px;height:1px;background:#cfcfcf;"></div>
<div style="left:255px;top:827px;width:25px;height:19px;background:#6b6b6b;"></div>
<span class="t" style="top:829px;height:18px;line-height:18px;font-size:12.3px;color:#f4f4f4;white-space:pre;font-weight:bold;letter-spacing:0.309px;left:260.00px;">32</span>
<div style="left:255px;top:846px;width:25px;height:1px;background:#cfcfcf;"></div>
<div style="left:255px;top:847px;width:25px;height:19px;background:#6b6b6b;"></div>
<span class="t" style="top:849px;height:18px;line-height:18px;font-size:12.3px;color:#f4f4f4;white-space:pre;font-weight:bold;letter-spacing:0.309px;left:260.00px;">33</span>
<div style="left:255px;top:866px;width:25px;height:1px;background:#cfcfcf;"></div>
<div style="left:255px;top:867px;width:25px;height:19px;background:#6b6b6b;"></div>
<span class="t" style="top:869px;height:18px;line-height:18px;font-size:12.3px;color:#f4f4f4;white-space:pre;font-weight:bold;letter-spacing:0.309px;left:260.00px;">34</span>
<div style="left:255px;top:886px;width:25px;height:1px;background:#cfcfcf;"></div>
<div style="left:255px;top:887px;width:25px;height:8px;background:#6b6b6b;"></div>
<div style="left:255px;top:887px;width:25px;height:8px;overflow:hidden;"><span class="t" style="left:0;width:25px;text-align:center;top:0.5px;line-height:19px;font-size:12.3px;font-weight:bold;color:#f4f4f4;">35</span></div>
<div style="left:280px;top:207px;width:291px;height:239px;background:#d3d3d3;"></div>
<div style="left:510px;top:427px;width:61px;height:19px;background:#ffffff;"></div>
<div style="left:280px;top:226px;width:830px;height:1px;background:#d6d6d6;"></div>
<div style="left:280px;top:246px;width:830px;height:1px;background:#d6d6d6;"></div>
<div style="left:280px;top:266px;width:830px;height:1px;background:#d6d6d6;"></div>
<div style="left:280px;top:286px;width:830px;height:1px;background:#d6d6d6;"></div>
<div style="left:280px;top:306px;width:830px;height:1px;background:#d6d6d6;"></div>
<div style="left:280px;top:326px;width:830px;height:1px;background:#d6d6d6;"></div>
<div style="left:280px;top:346px;width:830px;height:1px;background:#d6d6d6;"></div>
<div style="left:280px;top:366px;width:830px;height:1px;background:#d6d6d6;"></div>
<div style="left:280px;top:386px;width:830px;height:1px;background:#d6d6d6;"></div>
<div style="left:280px;top:406px;width:830px;height:1px;background:#d6d6d6;"></div>
<div style="left:280px;top:426px;width:830px;height:1px;background:#d6d6d6;"></div>
<div style="left:280px;top:446px;width:830px;height:1px;background:#d6d6d6;"></div>
<div style="left:280px;top:466px;width:830px;height:1px;background:#d6d6d6;"></div>
<div style="left:280px;top:486px;width:830px;height:1px;background:#d6d6d6;"></div>
<div style="left:280px;top:506px;width:830px;height:1px;background:#d6d6d6;"></div>
<div style="left:280px;top:526px;width:830px;height:1px;background:#d6d6d6;"></div>
<div style="left:280px;top:546px;width:830px;height:1px;background:#d6d6d6;"></div>
<div style="left:280px;top:566px;width:830px;height:1px;background:#d6d6d6;"></div>
<div style="left:280px;top:586px;width:830px;height:1px;background:#d6d6d6;"></div>
<div style="left:280px;top:606px;width:830px;height:1px;background:#d6d6d6;"></div>
<div style="left:280px;top:626px;width:830px;height:1px;background:#d6d6d6;"></div>
<div style="left:280px;top:646px;width:830px;height:1px;background:#d6d6d6;"></div>
<div style="left:280px;top:666px;width:830px;height:1px;background:#d6d6d6;"></div>
<div style="left:280px;top:686px;width:830px;height:1px;background:#d6d6d6;"></div>
<div style="left:280px;top:706px;width:830px;height:1px;background:#d6d6d6;"></div>
<div style="left:280px;top:726px;width:830px;height:1px;background:#d6d6d6;"></div>
<div style="left:280px;top:746px;width:830px;height:1px;background:#d6d6d6;"></div>
<div style="left:280px;top:766px;width:830px;height:1px;background:#d6d6d6;"></div>
<div style="left:280px;top:786px;width:830px;height:1px;background:#d6d6d6;"></div>
<div style="left:280px;top:806px;width:830px;height:1px;background:#d6d6d6;"></div>
<div style="left:280px;top:826px;width:830px;height:1px;background:#d6d6d6;"></div>
<div style="left:280px;top:846px;width:830px;height:1px;background:#d6d6d6;"></div>
<div style="left:280px;top:866px;width:830px;height:1px;background:#d6d6d6;"></div>
<div style="left:280px;top:886px;width:830px;height:1px;background:#d6d6d6;"></div>
<div style="left:375px;top:207px;width:1px;height:688px;background:#d6d6d6;"></div>
<div style="left:437px;top:207px;width:1px;height:688px;background:#d6d6d6;"></div>
<div style="left:509px;top:207px;width:1px;height:688px;background:#d6d6d6;"></div>
<div style="left:571px;top:207px;width:1px;height:688px;background:#d6d6d6;"></div>
<div style="left:633px;top:207px;width:1px;height:688px;background:#d6d6d6;"></div>
<div style="left:695px;top:207px;width:1px;height:688px;background:#d6d6d6;"></div>
<div style="left:757px;top:207px;width:1px;height:688px;background:#d6d6d6;"></div>
<div style="left:819px;top:207px;width:1px;height:688px;background:#d6d6d6;"></div>
<div style="left:881px;top:207px;width:1px;height:688px;background:#d6d6d6;"></div>
<div style="left:943px;top:207px;width:1px;height:688px;background:#d6d6d6;"></div>
<div style="left:1005px;top:207px;width:1px;height:688px;background:#d6d6d6;"></div>
<div style="left:1067px;top:207px;width:1px;height:688px;background:#d6d6d6;"></div>
<div style="left:280px;top:226px;width:291px;height:1px;background:#9d9d9d;"></div>
<div style="left:280px;top:246px;width:291px;height:1px;background:#9d9d9d;"></div>
<div style="left:280px;top:266px;width:291px;height:1px;background:#9d9d9d;"></div>
<div style="left:280px;top:286px;width:291px;height:1px;background:#9d9d9d;"></div>
<div style="left:280px;top:306px;width:291px;height:1px;background:#9d9d9d;"></div>
<div style="left:280px;top:326px;width:291px;height:1px;background:#9d9d9d;"></div>
<div style="left:280px;top:346px;width:291px;height:1px;background:#9d9d9d;"></div>
<div style="left:280px;top:366px;width:291px;height:1px;background:#9d9d9d;"></div>
<div style="left:280px;top:386px;width:291px;height:1px;background:#9d9d9d;"></div>
<div style="left:280px;top:406px;width:291px;height:1px;background:#9d9d9d;"></div>
<div style="left:280px;top:426px;width:291px;height:1px;background:#9d9d9d;"></div>
<div style="left:375px;top:207px;width:1px;height:239px;background:#9d9d9d;"></div>
<div style="left:437px;top:207px;width:1px;height:239px;background:#9d9d9d;"></div>
<div style="left:509px;top:207px;width:1px;height:239px;background:#9d9d9d;"></div>
<div style="left:278px;top:205px;width:295px;height:2px;background:#1e7145;"></div>
<div style="left:278px;top:446px;width:295px;height:2px;background:#1e7145;"></div>
<div style="left:278px;top:205px;width:2px;height:243px;background:#1e7145;"></div>
<div style="left:571px;top:205px;width:2px;height:243px;background:#1e7145;"></div>
<div style="left:280px;top:207px;width:291px;height:1px;background:#f4f4f4;"></div>
<div style="left:280px;top:445px;width:291px;height:1px;background:#f4f4f4;"></div>
<div style="left:280px;top:207px;width:1px;height:239px;background:#f4f4f4;"></div>
<div style="left:570px;top:207px;width:1px;height:239px;background:#f4f4f4;"></div>
<span class="t" style="top:209px;height:18px;line-height:18px;font-size:12px;color:#303030;white-space:pre;font-weight:bold;letter-spacing:-0.051px;left:281.40px;">Manufacturer</span>
<span class="t" style="top:209px;height:18px;line-height:18px;font-size:12px;color:#303030;white-space:pre;font-weight:bold;left:256.50px;width:300px;text-align:center;">Cost</span>
<span class="t" style="top:209px;height:18px;line-height:18px;font-size:12px;color:#303030;white-space:pre;font-weight:bold;left:323.50px;width:300px;text-align:center;">Expenses</span>
<span class="t" style="top:209px;height:18px;line-height:18px;font-size:12px;color:#303030;white-space:pre;font-weight:bold;left:390.50px;width:300px;text-align:center;">Margin</span>
<span class="t" style="top:229px;height:18px;line-height:18px;font-size:12px;color:#444444;white-space:pre;left:281.40px;">Acme</span>
<span class="t" style="top:229px;height:18px;line-height:18px;font-size:12px;color:#444444;white-space:pre;right:675.00px;text-align:right;">$574.94</span>
<span class="t" style="top:229px;height:18px;line-height:18px;font-size:12px;color:#444444;white-space:pre;right:603.00px;text-align:right;">924,590</span>
<span class="t" style="top:229px;height:18px;line-height:18px;font-size:12px;color:#444444;white-space:pre;right:541.00px;text-align:right;">37.78%</span>
<span class="t" style="top:249px;height:18px;line-height:18px;font-size:12px;color:#444444;white-space:pre;left:281.40px;">Adihash</span>
<span class="t" style="top:249px;height:18px;line-height:18px;font-size:12px;color:#444444;white-space:pre;right:675.00px;text-align:right;">$567.07</span>
<span class="t" style="top:249px;height:18px;line-height:18px;font-size:12px;color:#444444;white-space:pre;right:603.00px;text-align:right;">866,032</span>
<span class="t" style="top:249px;height:18px;line-height:18px;font-size:12px;color:#444444;white-space:pre;right:541.00px;text-align:right;">39.21%</span>
<span class="t" style="top:269px;height:18px;line-height:18px;font-size:12px;color:#444444;white-space:pre;left:281.40px;">Esics</span>
<span class="t" style="top:269px;height:18px;line-height:18px;font-size:12px;color:#444444;white-space:pre;right:675.00px;text-align:right;">$563.12</span>
<span class="t" style="top:269px;height:18px;line-height:18px;font-size:12px;color:#444444;white-space:pre;right:603.00px;text-align:right;">849,613</span>
<span class="t" style="top:269px;height:18px;line-height:18px;font-size:12px;color:#444444;white-space:pre;right:541.00px;text-align:right;">39.31%</span>
<span class="t" style="top:289px;height:18px;line-height:18px;font-size:12px;color:#444444;white-space:pre;left:281.40px;">Nuke</span>
<span class="t" style="top:289px;height:18px;line-height:18px;font-size:12px;color:#444444;white-space:pre;right:675.00px;text-align:right;">$612.36</span>
<span class="t" style="top:289px;height:18px;line-height:18px;font-size:12px;color:#444444;white-space:pre;right:603.00px;text-align:right;">943,447</span>
<span class="t" style="top:289px;height:18px;line-height:18px;font-size:12px;color:#444444;white-space:pre;right:541.00px;text-align:right;">37.09%</span>
<span class="t" style="top:309px;height:18px;line-height:18px;font-size:12px;color:#444444;white-space:pre;left:281.40px;">Old Balance</span>
<span class="t" style="top:309px;height:18px;line-height:18px;font-size:12px;color:#444444;white-space:pre;right:675.00px;text-align:right;">$552.56</span>
<span class="t" style="top:309px;height:18px;line-height:18px;font-size:12px;color:#444444;white-space:pre;right:603.00px;text-align:right;">808,425</span>
<span class="t" style="top:309px;height:18px;line-height:18px;font-size:12px;color:#444444;white-space:pre;right:541.00px;text-align:right;">37.62%</span>
<span class="t" style="top:329px;height:18px;line-height:18px;font-size:12px;color:#444444;white-space:pre;left:281.40px;">Over Armour</span>
<span class="t" style="top:329px;height:18px;line-height:18px;font-size:12px;color:#444444;white-space:pre;right:675.00px;text-align:right;">$635.34</span>
<span class="t" style="top:329px;height:18px;line-height:18px;font-size:12px;color:#444444;white-space:pre;right:603.00px;text-align:right;">1,057,876</span>
<span class="t" style="top:329px;height:18px;line-height:18px;font-size:12px;color:#444444;white-space:pre;right:541.00px;text-align:right;">35.62%</span>
<span class="t" style="top:349px;height:18px;line-height:18px;font-size:12px;color:#444444;white-space:pre;left:281.40px;">Poomah</span>
<span class="t" style="top:349px;height:18px;line-height:18px;font-size:12px;color:#444444;white-space:pre;right:675.00px;text-align:right;">$576.71</span>
<span class="t" style="top:349px;height:18px;line-height:18px;font-size:12px;color:#444444;white-space:pre;right:603.00px;text-align:right;">934,770</span>
<span class="t" style="top:349px;height:18px;line-height:18px;font-size:12px;color:#444444;white-space:pre;right:541.00px;text-align:right;">39.22%</span>
<span class="t" style="top:369px;height:18px;line-height:18px;font-size:12px;color:#444444;white-space:pre;left:281.40px;">Princess</span>
<span class="t" style="top:369px;height:18px;line-height:18px;font-size:12px;color:#444444;white-space:pre;right:675.00px;text-align:right;">$581.43</span>
<span class="t" style="top:369px;height:18px;line-height:18px;font-size:12px;color:#444444;white-space:pre;right:603.00px;text-align:right;">864,368</span>
<span class="t" style="top:369px;height:18px;line-height:18px;font-size:12px;color:#444444;white-space:pre;right:541.00px;text-align:right;">38.26%</span>
<span class="t" style="top:389px;height:18px;line-height:18px;font-size:12px;color:#444444;white-space:pre;left:281.40px;">Ribuck</span>
<span class="t" style="top:389px;height:18px;line-height:18px;font-size:12px;color:#444444;white-space:pre;right:675.00px;text-align:right;">$602.24</span>
<span class="t" style="top:389px;height:18px;line-height:18px;font-size:12px;color:#444444;white-space:pre;right:603.00px;text-align:right;">1,022,140</span>
<span class="t" style="top:389px;height:18px;line-height:18px;font-size:12px;color:#444444;white-space:pre;right:541.00px;text-align:right;">37.16%</span>
<span class="t" style="top:409px;height:18px;line-height:18px;font-size:12px;color:#444444;white-space:pre;left:281.40px;">Slicenger</span>
<span class="t" style="top:409px;height:18px;line-height:18px;font-size:12px;color:#444444;white-space:pre;right:675.00px;text-align:right;">$592.08</span>
<span class="t" style="top:409px;height:18px;line-height:18px;font-size:12px;color:#444444;white-space:pre;right:603.00px;text-align:right;">938,849</span>
<span class="t" style="top:409px;height:18px;line-height:18px;font-size:12px;color:#444444;white-space:pre;right:541.00px;text-align:right;">37.78%</span>
<span class="t" style="top:429px;height:18px;line-height:18px;font-size:12px;color:#444444;white-space:pre;left:281.40px;">Woolson</span>
<span class="t" style="top:429px;height:18px;line-height:18px;font-size:12px;color:#444444;white-space:pre;right:675.00px;text-align:right;">$571.90</span>
<span class="t" style="top:429px;height:18px;line-height:18px;font-size:12px;color:#444444;white-space:pre;right:603.00px;text-align:right;">987,319</span>
<span class="t" style="top:429px;height:18px;line-height:18px;font-size:12px;color:#444444;white-space:pre;right:541.00px;text-align:right;">38.19%</span>
<div style="left:255px;top:895px;width:855px;height:28px;background:#6b6b6b;"></div>
<div style="left:255px;top:895px;width:855px;height:1px;background:#5c5c5c;"></div>
<div style="left:255px;top:902px;width:855px;height:15px;background:#565656;"></div>
<div style="left:256.5px;top:903px;width:12.5px;height:13px;background:#8e8e8e;"></div>
<svg style="left:256px;top:902.5px;" width="14" height="14" viewBox="0 0 14 14"><polygon points="8.8,3 8.8,11 4.2,7" fill="#b0b0b0"/></svg>
<div style="left:271px;top:903px;width:850px;height:13px;background:#9a9a9a;"></div>
<div style="left:563px;top:440px;width:231.5px;height:240.6px;background:#ffffff;border:1px solid #a9a9a9;box-sizing:border-box;box-shadow:2px 2px 4px rgba(0,0,0,0.35);"></div>
<div style="left:564px;top:654px;width:229.5px;height:25.6px;background:#d9ecfb;"></div>
<span class="t" style="top:446px;height:18px;line-height:18px;font-size:12.3px;color:#4e4e4e;white-space:pre;letter-spacing:-0.404px;left:597.30px;">Copy</span>
<span class="t" style="top:472px;height:18px;line-height:18px;font-size:12.3px;color:#4e4e4e;white-space:pre;letter-spacing:-0.380px;left:597.30px;">Cut</span>
<span class="t" style="top:499px;height:18px;line-height:18px;font-size:12.3px;color:#4e4e4e;white-space:pre;letter-spacing:-0.287px;left:598.40px;">Paste options</span>
<span class="t" style="top:575px;height:18px;line-height:18px;font-size:12.3px;color:#4e4e4e;white-space:pre;letter-spacing:-0.324px;left:597.40px;">Clear Contents</span>
<span class="t" style="top:604px;height:18px;line-height:18px;font-size:12.3px;color:#4e4e4e;white-space:pre;letter-spacing:-0.322px;left:597.60px;">Filter</span>
<span class="t" style="top:630px;height:18px;line-height:18px;font-size:12.3px;color:#4e4e4e;white-space:pre;letter-spacing:-0.365px;left:597.40px;">Sort</span>
<span class="t" style="top:659px;height:18px;line-height:18px;font-size:12.3px;color:#4e4e4e;white-space:pre;letter-spacing:-0.456px;left:597.40px;">Visualize</span>
<div style="left:585.3px;top:568.5px;width:202.20000000000005px;height:1px;background:#dcdcdc;"></div>
<div style="left:585.3px;top:597.1px;width:202.20000000000005px;height:1px;background:#dcdcdc;"></div>
<div style="left:585.3px;top:651.8px;width:202.20000000000005px;height:1px;background:#dcdcdc;"></div>
<svg style="left:779.9px;top:634.7px;" width="5" height="8" viewBox="0 0 5 8"><polygon points="0,0 4.6,3.7 0,7.4" fill="#111"/></svg>
<svg style="left:779.9px;top:663.8000000000001px;" width="5" height="8" viewBox="0 0 5 8"><polygon points="0,0 4.6,3.7 0,7.4" fill="#111"/></svg>
<svg style="left:0px;top:0px;" width="1" height="1" viewBox="0 0 1 1"><path d="M575.6 446.6 H569.6 V459.8 H574.4" fill="none" stroke="#a0a0a0" stroke-width="1"/><path d="M575.7 449.8 H581.4 L584.5 452.9 V461.4 H575.7 Z" fill="#fff" stroke="#808080" stroke-width="1"/><path d="M581.2 450 V453.1 H584.3" fill="none" stroke="#808080" stroke-width="1"/><path d="M578.4 457.6 H581.8" stroke="#808080" stroke-width="1"/></svg>
<svg style="left:569px;top:472px;" width="18" height="18" viewBox="0 0 18 18"><path d="M5.2 1.4 L10.6 12 M11.6 1.4 L6.2 12" stroke="#7a7a7a" stroke-width="0.9" fill="none"/><circle cx="5.2" cy="13.6" r="1.9" fill="none" stroke="#3a8fd0" stroke-width="1"/><circle cx="11.6" cy="13.6" r="1.9" fill="none" stroke="#3a8fd0" stroke-width="1"/></svg>
<svg style="left:571.3px;top:498.4px;" width="24" height="24" viewBox="0 0 24 24"><g transform="scale(0.8)"><path d="M5.4 2.8 H1.6 V18.6 H4.6 M10.8 2.8 H13.6 V6.6" fill="none" stroke="#d8923a" stroke-width="1.7"/><path d="M5.8 3.6 V1.8 H7 V0.8 H9.4 V1.8 H10.6 V3.6 Z" fill="#fff" stroke="#8a8a8a" stroke-width="0.8"/><rect x="6.6" y="8.6" width="8.6" height="11" fill="#fff" stroke="#8a8a8a" stroke-width="1"/></g></svg>
<svg style="left:0px;top:0px;" width="1110" height="926" viewBox="0 0 1110 926"><path d="M595.8000000000001 533.1 H592.6 V551.4 H597.4" fill="none" stroke="#d8923a" stroke-width="1.4"/><path d="M603.0 533.1 H606.4 V537.6" fill="none" stroke="#d8923a" stroke-width="1.4"/><path d="M596.4 535.4 V533.6 H598.0 L598.6 531.6 H600.8 L601.4 533.6 H603.0 V535.4 Z" fill="#fff" stroke="#8a8a8a" stroke-width="0.8"/><rect x="599.8" y="541.2" width="9.4" height="11.8" fill="#fff" stroke="#777" stroke-width="1.2"/><path d="M629.5 533.1 H626.3 V551.4 H631.0999999999999" fill="none" stroke="#d8923a" stroke-width="1.4"/><path d="M636.6999999999999 533.1 H640.0999999999999 V537.6" fill="none" stroke="#d8923a" stroke-width="1.4"/><path d="M630.0999999999999 535.4 V533.6 H631.6999999999999 L632.3 531.6 H634.4999999999999 L635.0999999999999 533.6 H636.6999999999999 V535.4 Z" fill="#fff" stroke="#8a8a8a" stroke-width="0.8"/><path d="M663.4000000000001 533.1 H660.2 V551.4 H665.0" fill="none" stroke="#d8923a" stroke-width="1.4"/><path d="M670.6 533.1 H674.0 V537.6" fill="none" stroke="#d8923a" stroke-width="1.4"/><path d="M664.0 535.4 V533.6 H665.6 L666.2 531.6 H668.4 L669.0 533.6 H670.6 V535.4 Z" fill="#fff" stroke="#8a8a8a" stroke-width="0.8"/><path d="M697.6 533.1 H694.4 V551.4 H699.1999999999999" fill="none" stroke="#d8923a" stroke-width="1.4"/><path d="M704.8 533.1 H708.1999999999999 V537.6" fill="none" stroke="#d8923a" stroke-width="1.4"/><path d="M698.1999999999999 535.4 V533.6 H699.8 L700.4 531.6 H702.5999999999999 L703.1999999999999 533.6 H704.8 V535.4 Z" fill="#fff" stroke="#8a8a8a" stroke-width="0.8"/><circle cx="707.1" cy="543.9" r="1.45" fill="#8a55c0"/><circle cx="711.2" cy="547.6" r="1.45" fill="#3b7fc0"/><circle cx="702.3" cy="548" r="1.45" fill="#e0953f"/><circle cx="704.2" cy="552.8" r="1.45" fill="#35a58a"/><circle cx="709.9" cy="552.8" r="1.45" fill="#e0584f"/><path d="M731.5 533.1 H728.3 V535" fill="none" stroke="#d8923a" stroke-width="1.4"/><path d="M738.6999999999999 533.1 H742.5999999999999 V546.7" fill="none" stroke="#d8923a" stroke-width="1.4"/><path d="M728.3 546.7 V551.4 H732.6999999999999" fill="none" stroke="#d8923a" stroke-width="1.4"/><path d="M732.0999999999999 535.4 V533.6 H733.6999999999999 L734.3 531.6 H736.4999999999999 L737.0999999999999 533.6 H738.6999999999999 V535.4 Z" fill="#fff" stroke="#8a8a8a" stroke-width="0.8"/><circle cx="729.8" cy="538.8" r="1.25" fill="#8a55c0"/><circle cx="732.6" cy="541.4" r="1.25" fill="#3b7fc0"/><circle cx="726.9" cy="541.4" r="1.25" fill="#e0953f"/><circle cx="727.9" cy="544.4" r="1.25" fill="#35a58a"/><circle cx="732.1" cy="544.4" r="1.25" fill="#e0584f"/><path d="M765.1 533.1 H761.9 V535" fill="none" stroke="#d8923a" stroke-width="1.4"/><path d="M772.3 533.1 H776.1999999999999 V537.6" fill="none" stroke="#d8923a" stroke-width="1.4"/><path d="M761.9 546.7 V551.4 H766.3" fill="none" stroke="#d8923a" stroke-width="1.4"/><path d="M765.6999999999999 535.4 V533.6 H767.3 L767.9 531.6 H770.0999999999999 L770.6999999999999 533.6 H772.3 V535.4 Z" fill="#fff" stroke="#8a8a8a" stroke-width="0.8"/><circle cx="763.4" cy="538.8" r="1.25" fill="#8a55c0"/><circle cx="766.2" cy="541.4" r="1.25" fill="#3b7fc0"/><circle cx="760.5" cy="541.4" r="1.25" fill="#e0953f"/><circle cx="761.5" cy="544.4" r="1.25" fill="#35a58a"/><circle cx="765.7" cy="544.4" r="1.25" fill="#e0584f"/></svg>
<span class="t" style="top:540px;height:19px;line-height:19px;font-size:14px;color:#4c4c4c;white-space:pre;font-family:'Liberation Serif','Times New Roman',serif;font-style:italic;left:634.20px;letter-spacing:0.4px;">fx</span>
<span class="t" style="top:541px;height:14px;line-height:14px;font-size:9.2px;color:#3b7fc0;white-space:pre;letter-spacing:-0.050px;left:664.10px;">123</span>
<span class="t" style="top:545px;height:14px;line-height:14px;font-size:9.2px;color:#3b7fc0;white-space:pre;letter-spacing:-0.250px;left:732.60px;">123</span>
<span class="t" style="top:540px;height:19px;line-height:19px;font-size:14px;color:#4c4c4c;white-space:pre;font-family:'Liberation Serif','Times New Roman',serif;font-style:italic;left:770.80px;letter-spacing:0.4px;">fx</span>
<svg style="left:0px;top:0px;" width="1110" height="926" viewBox="0 0 1110 926"><path d="M570.6 577.2 L583.4 589.4 M583.4 577.2 L570.6 589.4" stroke="#555" stroke-width="1.7" stroke-linecap="round"/><path d="M570.6 605.8 H583.6 L578.8 612.2 V618.2 L575.6 619.4 V612.2 Z" fill="none" stroke="#858585" stroke-width="1.1" stroke-linejoin="round"/><path d="M581.1 631.5 V645 M578.6 642 L581.1 645.2 L583.6 642" fill="none" stroke="#3a8fb8" stroke-width="1"/><rect x="575.5" y="661.3" width="2" height="7.5" fill="#12a5a0"/><rect x="578.6" y="664.4" width="2" height="4.4" fill="#12a5a0"/><rect x="581.8" y="659.2" width="2" height="9.6" fill="#12a5a0"/><rect x="570.2" y="661.3" width="3.2" height="1.8" fill="#777"/><rect x="570.2" y="664.4" width="3.2" height="1.8" fill="#777"/><rect x="570.2" y="667.5" width="3.2" height="1.8" fill="#777"/><rect x="570.2" y="670.4" width="3.2" height="1.8" fill="#777"/><rect x="570.2" y="673.1" width="3.2" height="1.8" fill="#777"/><rect x="574.7" y="670.4" width="2.7" height="1.8" fill="#777"/><rect x="578.6" y="670.4" width="1.9" height="1.8" fill="#777"/><rect x="581.4" y="670.4" width="2.5" height="1.8" fill="#777"/><rect x="574.7" y="673.1" width="2.7" height="1.8" fill="#777"/><rect x="578.6" y="673.1" width="1.9" height="1.8" fill="#777"/><rect x="581.4" y="673.1" width="2.5" height="1.8" fill="#777"/></svg>
<span class="t" style="top:628px;height:11px;line-height:11px;font-size:7px;color:#777;white-space:pre;left:572.00px;">A</span>
<span class="t" style="top:636px;height:14px;line-height:14px;font-size:8.6px;color:#555;white-space:pre;letter-spacing:-0.053px;left:571.80px;">Z</span>
<div style="left:795px;top:653px;width:117px;height:79.5px;background:#ffffff;border:1px solid #a9a9a9;box-sizing:border-box;box-shadow:2px 2px 4px rgba(0,0,0,0.35);"></div>
<div style="left:796px;top:654px;width:115px;height:25.8px;background:#d9ecfb;"></div>
<span class="t" style="top:659px;height:18px;line-height:18px;font-size:12.3px;color:#4e4e4e;white-space:pre;letter-spacing:-0.774px;left:829.60px;">Panel 1</span>
<svg style="left:896.6px;top:663.8000000000001px;" width="5" height="8" viewBox="0 0 5 8"><polygon points="0,0 4.6,3.7 0,7.4" fill="#111"/></svg>
<span class="t" style="top:685px;height:18px;line-height:18px;font-size:12.3px;color:#4e4e4e;white-space:pre;letter-spacing:-0.774px;left:829.60px;">Panel 2</span>
<svg style="left:896.6px;top:689.6px;" width="5" height="8" viewBox="0 0 5 8"><polygon points="0,0 4.6,3.7 0,7.4" fill="#111"/></svg>
<span class="t" style="top:711px;height:18px;line-height:18px;font-size:12.3px;color:#4e4e4e;white-space:pre;letter-spacing:-0.774px;left:829.60px;">Panel 3</span>
<svg style="left:896.6px;top:715.8000000000001px;" width="5" height="8" viewBox="0 0 5 8"><polygon points="0,0 4.6,3.7 0,7.4" fill="#111"/></svg>
<svg style="left:0px;top:0px;" width="1110" height="926" viewBox="0 0 1110 926"><rect x="802.00" y="660.10" width="1.9" height="1.9" fill="#857d76"/><rect x="805.05" y="660.10" width="1.9" height="1.9" fill="#857d76"/><rect x="808.10" y="660.10" width="1.9" height="1.9" fill="#857d76"/><rect x="811.15" y="660.10" width="1.9" height="1.9" fill="#857d76"/><rect x="814.20" y="660.10" width="1.9" height="1.9" fill="#857d76"/><rect x="802" y="663.15" width="1.9" height="1.9" fill="#857d76"/><rect x="802" y="666.20" width="1.9" height="1.9" fill="#857d76"/><rect x="802" y="669.25" width="1.9" height="1.9" fill="#857d76"/><rect x="802" y="672.30" width="1.9" height="1.9" fill="#857d76"/><rect x="805.6" y="663.80" width="9.8" height="9.4" fill="#fff" stroke="#14a8a2" stroke-width="1.3"/><rect x="802.00" y="685.90" width="1.9" height="1.9" fill="#857d76"/><rect x="805.05" y="685.90" width="1.9" height="1.9" fill="#857d76"/><rect x="808.10" y="685.90" width="1.9" height="1.9" fill="#857d76"/><rect x="811.15" y="685.90" width="1.9" height="1.9" fill="#857d76"/><rect x="814.20" y="685.90" width="1.9" height="1.9" fill="#857d76"/><rect x="802" y="688.95" width="1.9" height="1.9" fill="#857d76"/><rect x="802" y="692.00" width="1.9" height="1.9" fill="#857d76"/><rect x="802" y="695.05" width="1.9" height="1.9" fill="#857d76"/><rect x="802" y="698.10" width="1.9" height="1.9" fill="#857d76"/><rect x="805.6" y="689.60" width="9.8" height="9.4" fill="#fff" stroke="#14a8a2" stroke-width="1.3"/><rect x="802.00" y="711.70" width="1.9" height="1.9" fill="#857d76"/><rect x="805.05" y="711.70" width="1.9" height="1.9" fill="#857d76"/><rect x="808.10" y="711.70" width="1.9" height="1.9" fill="#857d76"/><rect x="811.15" y="711.70" width="1.9" height="1.9" fill="#857d76"/><rect x="814.20" y="711.70" width="1.9" height="1.9" fill="#857d76"/><rect x="802" y="714.75" width="1.9" height="1.9" fill="#857d76"/><rect x="802" y="717.80" width="1.9" height="1.9" fill="#857d76"/><rect x="802" y="720.85" width="1.9" height="1.9" fill="#857d76"/><rect x="802" y="723.90" width="1.9" height="1.9" fill="#857d76"/><rect x="805.6" y="715.40" width="9.8" height="9.4" fill="#fff" stroke="#14a8a2" stroke-width="1.3"/></svg>
<div style="left:912.8px;top:646.6px;width:140px;height:276.2px;background:#ffffff;border:1px solid #a9a9a9;box-sizing:border-box;box-shadow:2px 2px 4px rgba(0,0,0,0.35);"></div>
<span class="t" style="top:652px;height:18px;line-height:18px;font-size:12.3px;color:#4e4e4e;white-space:pre;letter-spacing:-0.434px;left:946.50px;">Grid</span>
<svg style="left:1038.1px;top:656.6px;" width="5" height="8" viewBox="0 0 5 8"><polygon points="0,0 4.6,3.7 0,7.4" fill="#111"/></svg>
<span class="t" style="top:681px;height:18px;line-height:18px;font-size:12.3px;color:#4e4e4e;white-space:pre;letter-spacing:-0.298px;left:946.50px;">Column</span>
<svg style="left:1038.1px;top:685.7px;" width="5" height="8" viewBox="0 0 5 8"><polygon points="0,0 4.6,3.7 0,7.4" fill="#111"/></svg>
<span class="t" style="top:707px;height:18px;line-height:18px;font-size:12.3px;color:#4e4e4e;white-space:pre;letter-spacing:-0.639px;left:946.50px;">Line</span>
<svg style="left:1038.1px;top:711.6px;" width="5" height="8" viewBox="0 0 5 8"><polygon points="0,0 4.6,3.7 0,7.4" fill="#111"/></svg>
<span class="t" style="top:733px;height:18px;line-height:18px;font-size:12.3px;color:#4e4e4e;white-space:pre;letter-spacing:-0.571px;left:946.50px;">Area</span>
<svg style="left:1038.1px;top:737.6px;" width="5" height="8" viewBox="0 0 5 8"><polygon points="0,0 4.6,3.7 0,7.4" fill="#111"/></svg>
<span class="t" style="top:759px;height:18px;line-height:18px;font-size:12.3px;color:#4e4e4e;white-space:pre;letter-spacing:-0.981px;left:946.50px;">Bar</span>
<svg style="left:1038.1px;top:763.6px;" width="5" height="8" viewBox="0 0 5 8"><polygon points="0,0 4.6,3.7 0,7.4" fill="#111"/></svg>
<span class="t" style="top:788px;height:18px;line-height:18px;font-size:12.3px;color:#4e4e4e;white-space:pre;letter-spacing:-0.405px;left:946.50px;">Segment</span>
<svg style="left:1038.1px;top:792.7px;" width="5" height="8" viewBox="0 0 5 8"><polygon points="0,0 4.6,3.7 0,7.4" fill="#111"/></svg>
<span class="t" style="top:817px;height:18px;line-height:18px;font-size:12.3px;color:#4e4e4e;white-space:pre;letter-spacing:-0.740px;left:946.50px;">Radar</span>
<svg style="left:1038.1px;top:821.7px;" width="5" height="8" viewBox="0 0 5 8"><polygon points="0,0 4.6,3.7 0,7.4" fill="#111"/></svg>
<span class="t" style="top:846px;height:18px;line-height:18px;font-size:12.3px;color:#4e4e4e;white-space:pre;letter-spacing:-0.083px;left:946.50px;">Multi-Value</span>
<svg style="left:1038.1px;top:850.7px;" width="5" height="8" viewBox="0 0 5 8"><polygon points="0,0 4.6,3.7 0,7.4" fill="#111"/></svg>
<span class="t" style="top:872px;height:18px;line-height:18px;font-size:12.3px;color:#4e4e4e;white-space:pre;letter-spacing:-0.353px;left:946.50px;">Hierarchical</span>
<svg style="left:1038.1px;top:876.8000000000001px;" width="5" height="8" viewBox="0 0 5 8"><polygon points="0,0 4.6,3.7 0,7.4" fill="#111"/></svg>
<span class="t" style="top:901px;height:18px;line-height:18px;font-size:12.3px;color:#4e4e4e;white-space:pre;letter-spacing:-0.686px;left:946.50px;">Gauge</span>
<svg style="left:1038.1px;top:905.4px;" width="5" height="8" viewBox="0 0 5 8"><polygon points="0,0 4.6,3.7 0,7.4" fill="#111"/></svg>
<div style="left:934px;top:673.9px;width:112px;height:1px;background:#dcdcdc;"></div>
<div style="left:934px;top:780.9px;width:112px;height:1px;background:#dcdcdc;"></div>
<div style="left:934px;top:809.9px;width:112px;height:1px;background:#dcdcdc;"></div>
<div style="left:934px;top:839.0px;width:112px;height:1px;background:#dcdcdc;"></div>
<div style="left:934px;top:894.1px;width:112px;height:1px;background:#dcdcdc;"></div>
<svg style="left:0px;top:0px;" width="1110" height="926" viewBox="0 0 1110 926"><rect x="919.2" y="653.2" width="1.8" height="1.7" fill="#d9a45c"/><rect x="922.2" y="653.2" width="10.9" height="1.7" fill="#d9a45c"/><rect x="919.2" y="656" width="1.8" height="11" fill="#d9a45c"/><rect x="922.20" y="656.10" width="1.9" height="1.9" fill="#3a8cbf"/><rect x="925.28" y="656.10" width="1.9" height="1.9" fill="#3a8cbf"/><rect x="928.36" y="656.10" width="1.9" height="1.9" fill="#3a8cbf"/><rect x="931.44" y="656.10" width="1.9" height="1.9" fill="#3a8cbf"/><rect x="922.20" y="659.18" width="1.9" height="1.9" fill="#3a8cbf"/><rect x="925.28" y="659.18" width="1.9" height="1.9" fill="#3a8cbf"/><rect x="928.36" y="659.18" width="1.9" height="1.9" fill="#3a8cbf"/><rect x="931.44" y="659.18" width="1.9" height="1.9" fill="#3a8cbf"/><rect x="922.20" y="662.26" width="1.9" height="1.9" fill="#3a8cbf"/><rect x="925.28" y="662.26" width="1.9" height="1.9" fill="#3a8cbf"/><rect x="928.36" y="662.26" width="1.9" height="1.9" fill="#3a8cbf"/><rect x="931.44" y="662.26" width="1.9" height="1.9" fill="#3a8cbf"/><rect x="922.20" y="665.34" width="1.9" height="1.9" fill="#3a8cbf"/><rect x="925.28" y="665.34" width="1.9" height="1.9" fill="#3a8cbf"/><rect x="928.36" y="665.34" width="1.9" height="1.9" fill="#3a8cbf"/><rect x="931.44" y="665.34" width="1.9" height="1.9" fill="#3a8cbf"/><rect x="919.1" y="682.2" width="1.8" height="13.4" fill="#4a90ba"/><rect x="922.4" y="687.3" width="1.5" height="8.3" fill="#4a90ba"/><rect x="925.4" y="685.3" width="1.4" height="10.3" fill="#4a90ba"/><rect x="928.3" y="684.1" width="1.5" height="11.5" fill="#4a90ba"/><rect x="931.2" y="690.3" width="1.9" height="5.3" fill="#4a90ba"/><polyline points="918.9,722.3 923.9,711 928,721.1 933.4,715.8" fill="none" stroke="#4a90ba" stroke-width="1"/><path d="M930.6 715.4 L933.6 715.6 L933.4 718.6" fill="none" stroke="#4a90ba" stroke-width="1"/><polyline points="919.1,717 923.3,720.5 934,707.5" fill="none" stroke="#e0584f" stroke-width="1"/><path d="M930.8 707.4 H934.1 V710.6" fill="none" stroke="#e0584f" stroke-width="1"/><polygon points="918.2,748.7 918.2,743.7 922.7,738 928.6,743.9 934,738.7 934,748.7" fill="#4a90ba"/><rect x="919.1" y="760.1" width="13.7" height="1.55" fill="#4a90ba"/><rect x="919.1" y="763.3" width="8.3" height="1.55" fill="#4a90ba"/><rect x="919.1" y="766.3" width="10.7" height="1.55" fill="#4a90ba"/><rect x="919.1" y="769.2" width="11.7" height="1.55" fill="#4a90ba"/><rect x="919.1" y="772.2" width="5.7" height="1.55" fill="#4a90ba"/><path d="M925.8 796 V788.6 A7.3 7.3 0 1 0 929.6 802.2 Z" fill="#4a90ba"/><path d="M927.4 794.8 V788.4 A7 7 0 0 1 933.6 794.8 Z" fill="#e57368"/><path d="M927.6 796.2 H933.6 A7 7 0 0 1 930.8 801.2 Z" fill="#6f9a3a"/><path d="M926.6 817 V834 M919.6 820.8 L933.8 831.6 M933.8 820.8 L919.6 831.6" stroke="#555" stroke-width="0.9" fill="none"/><polygon points="925.6,819.8 919.4,821.6 921.4,830 927.6,829 929.4,822.4" fill="none" stroke="#ef6a5f" stroke-width="1"/><polygon points="928.2,823.4 933.6,826.6 928.2,832.2 923.6,828" fill="none" stroke="#2fb0ea" stroke-width="1"/><path d="M925.7 847.2 V860.9 M918.2 854.3 H933.8" stroke="#555" stroke-width="0.9"/><circle cx="921.3" cy="850.3" r="1.35" fill="#4a90ba"/><circle cx="928.3" cy="850.8" r="1.35" fill="#4a90ba"/><circle cx="932.5" cy="848.1" r="1.35" fill="#4a90ba"/><circle cx="920.9" cy="858.2" r="1.35" fill="#4a90ba"/><circle cx="929.4" cy="858.2" r="1.35" fill="#4a90ba"/><rect x="919" y="873.3" width="4.7" height="13.7" fill="#4a90ba"/><rect x="925.2" y="873.3" width="3.6" height="8.6" fill="#4a90ba"/><rect x="929.9" y="873.3" width="3.1" height="2.8" fill="#d9a45c"/><rect x="929.9" y="877.2" width="3.1" height="4.7" fill="#7d9b3c"/><rect x="925.2" y="883" width="7.8" height="4" fill="#d9a45c"/><path d="M919.2 913.6 A7 7 0 0 1 921.6 906.8" fill="none" stroke="#6f9a3a" stroke-width="1.6"/><path d="M923.6 905.6 A7 7 0 0 1 932.8 913.6" fill="none" stroke="#e0655a" stroke-width="1.6"/><path d="M922.1 904.6 L928.5 911.6 A1.9 1.9 0 0 1 925.3 913.6 Z" fill="#4a90ba"/></svg>
<svg style="left:0px;top:0px;pointer-events:none;" width="1110" height="926" viewBox="0 0 1110 926"><defs><filter id="sh" x="-20%" y="-20%" width="140%" height="140%"><feGaussianBlur in="SourceAlpha" stdDeviation="2"/><feOffset dx="2.2" dy="2.8"/><feComponentTransfer><feFuncA type="linear" slope="0.5"/></feComponentTransfer><feMerge><feMergeNode/><feMergeNode in="SourceGraphic"/></feMerge></filter></defs><g filter="url(#sh)"><path d="M101.7 168.4 L146.4 97.4" fill="none" stroke="#f7a81b" stroke-width="4.7" stroke-dasharray="4.8 5.2" stroke-dashoffset="2.3"/><polygon points="154.8,82.4 153.8,99.4 140,91.3" fill="#f7a81b"/></g><g filter="url(#sh)"><path d="M531.9 442.6 C531.8 447.8 531.5 459.8 531.2 474.0 C530.9 488.2 530.4 516.8 530.2 528.0 C530.0 539.2 530.0 535.7 530.1 541.0 C530.2 546.3 530.3 553.5 530.9 560.0 C531.5 566.5 532.4 573.5 533.7 580.0 C535.1 586.5 536.3 593.0 539.0 599.0 C541.7 605.0 545.5 611.2 550.0 616.0 C554.5 620.8 560.2 624.5 566.0 627.6 C571.8 630.7 578.7 632.8 585.0 634.7 C591.3 636.6 598.0 638.0 604.0 639.1 C610.0 640.2 604.3 640.3 621.0 641.3 C637.7 642.3 673.3 643.9 704.0 645.0 C734.7 646.1 773.0 647.3 805.0 648.1 C837.0 648.9 878.7 649.6 896.0 650.0 C913.3 650.4 906.8 650.2 909.0 650.2" fill="none" stroke="#ff4040" stroke-width="4.6" stroke-dasharray="5 5" stroke-dashoffset="5"/><path d="M532.1 430.2 L531.9 442.6" stroke="#ff4040" stroke-width="4.6" fill="none"/><circle cx="532.1" cy="430.2" r="2.3" fill="#ff4040"/><polygon points="922.4,650.3 908,642.6 907.2,657.2" fill="#ff4040"/></g><path d="M806.4 667.4 V684.6 L810.2 681 L813 687.6 L815.6 686.4 L812.8 680 H817.8 Z" fill="#fff" stroke="#111" stroke-width="1"/></svg>
</body></html>
